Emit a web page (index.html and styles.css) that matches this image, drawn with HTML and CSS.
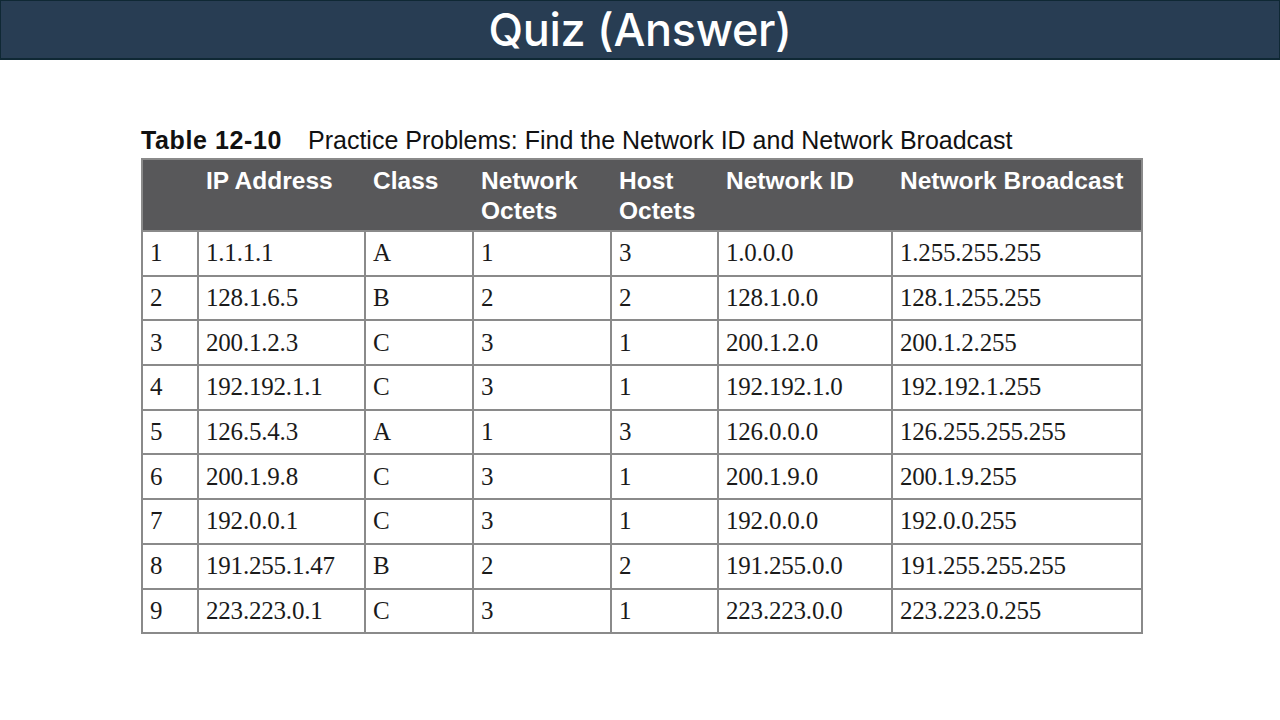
FILE: index.html
```html
<!DOCTYPE html>
<html>
<head>
<meta charset="utf-8">
<link rel="stylesheet" href="styles.css">
</head>
<body>
<header class="topbar"><h1 class="title">Quiz (Answer)</h1></header>
<main class="content">
  <div class="caption"><span class="cap-num">Table 12-10</span><span class="cap-text">Practice Problems: Find the Network ID and Network Broadcast</span></div>
  <table class="quiz">
    <colgroup>
      <col class="c1"><col class="c2"><col class="c3"><col class="c4"><col class="c5"><col class="c6"><col class="c7">
    </colgroup>
    <thead>
      <tr><th></th><th>IP Address</th><th>Class</th><th>Network<br>Octets</th><th>Host<br>Octets</th><th>Network ID</th><th>Network Broadcast</th></tr>
    </thead>
    <tbody>
      <tr><td>1</td><td>1.1.1.1</td><td>A</td><td>1</td><td>3</td><td>1.0.0.0</td><td>1.255.255.255</td></tr>
      <tr><td>2</td><td>128.1.6.5</td><td>B</td><td>2</td><td>2</td><td>128.1.0.0</td><td>128.1.255.255</td></tr>
      <tr><td>3</td><td>200.1.2.3</td><td>C</td><td>3</td><td>1</td><td>200.1.2.0</td><td>200.1.2.255</td></tr>
      <tr><td>4</td><td>192.192.1.1</td><td>C</td><td>3</td><td>1</td><td>192.192.1.0</td><td>192.192.1.255</td></tr>
      <tr><td>5</td><td>126.5.4.3</td><td>A</td><td>1</td><td>3</td><td>126.0.0.0</td><td>126.255.255.255</td></tr>
      <tr><td>6</td><td>200.1.9.8</td><td>C</td><td>3</td><td>1</td><td>200.1.9.0</td><td>200.1.9.255</td></tr>
      <tr><td>7</td><td>192.0.0.1</td><td>C</td><td>3</td><td>1</td><td>192.0.0.0</td><td>192.0.0.255</td></tr>
      <tr><td>8</td><td>191.255.1.47</td><td>B</td><td>2</td><td>2</td><td>191.255.0.0</td><td>191.255.255.255</td></tr>
      <tr><td>9</td><td>223.223.0.1</td><td>C</td><td>3</td><td>1</td><td>223.223.0.0</td><td>223.223.0.255</td></tr>
    </tbody>
  </table>
</main>
</body>
</html>
```
FILE: styles.css
```css
html, body { margin: 0; padding: 0; background: #ffffff; }
body { width: 1280px; height: 720px; overflow: hidden; }
.topbar {
  background: #283d53;
  border: 1px solid #0f2834;
  border-bottom-width: 2px;
  box-sizing: border-box;
  height: 60px;
  display: flex;
  align-items: center;
  justify-content: center;
}
.title {
  margin: 0;
  color: #ffffff;
  font-family: Inter, "Open Sans", sans-serif;
  font-weight: 500;
  font-size: 45px;
  line-height: 54px;
  letter-spacing: -0.3px;
}
.content {
  padding: 66px 0 0 141px;
}
.caption {
  font-family: "Liberation Sans", Arial, sans-serif;
  font-size: 25px;
  color: #111;
  line-height: 28px;
  height: 32px;
  display: flex;
}
.cap-num { font-weight: bold; width: 167px; letter-spacing: 0.6px; }
.cap-text { font-weight: normal; }
.quiz {
  border-collapse: collapse;
  table-layout: fixed;
  width: 1000px;
  border: 2px solid #8a8a8a;
}
.c1 { width: 56px; }
.c2 { width: 167px; }
.c3 { width: 108px; }
.c4 { width: 138px; }
.c5 { width: 107px; }
.c6 { width: 174px; }
.c7 { width: 250px; }
.quiz th {
  background: #58585a;
  color: #ffffff;
  font-family: "Liberation Sans", Arial, sans-serif;
  font-weight: bold;
  font-size: 24.5px;
  line-height: 30px;
  text-align: left;
  vertical-align: top;
  padding: 6px 8px 4px 8px;
  height: 70px;
  box-sizing: border-box;
}
.quiz td {
  border: 2px solid #8a8a8a;
  font-family: "Liberation Serif", "Times New Roman", serif;
  font-size: 25px;
  color: #1a1a1a;
  height: 44.7px;
  padding: 0 7px;
  box-sizing: border-box;
  vertical-align: middle;
  letter-spacing: -0.2px;
}
```
